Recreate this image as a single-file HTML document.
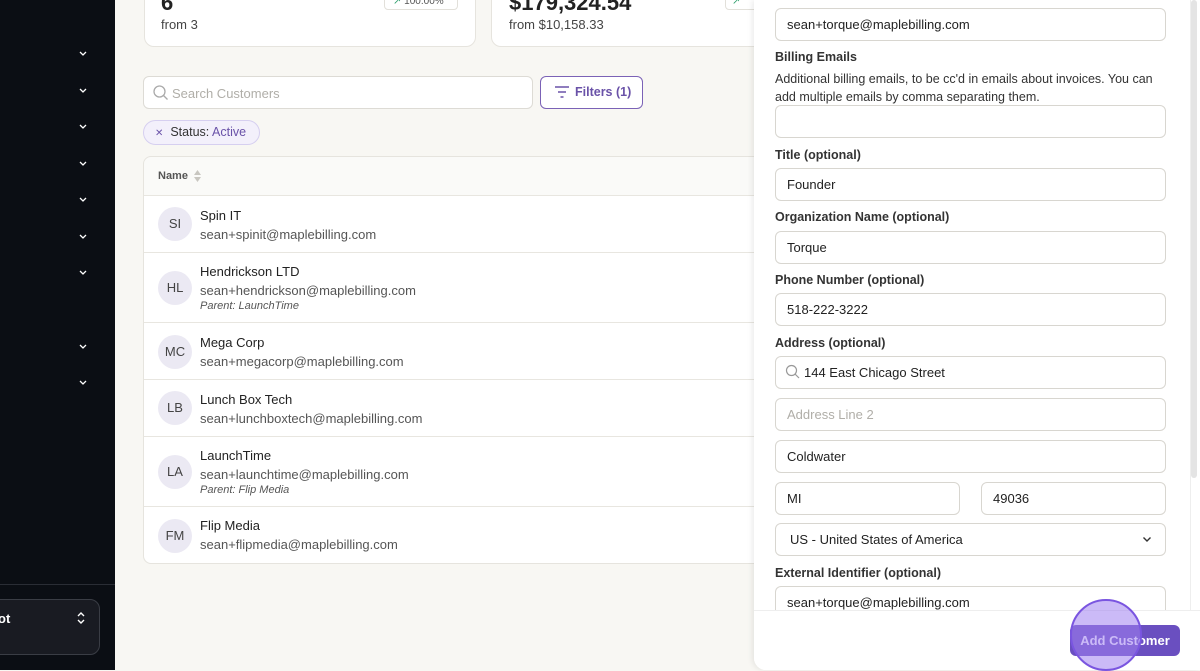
<!DOCTYPE html>
<html><head><style>
*{box-sizing:border-box;margin:0;padding:0}
body{width:1200px;height:670px;overflow:hidden;background:#f8f7f3;font-family:"Liberation Sans",sans-serif;position:relative;color:#222}
.sb{position:absolute;left:0;top:0;width:115px;height:670px;background:#0b0e14}
.chev{position:absolute;left:78px;width:10px;height:10px}
.card{position:absolute;background:#fff;border:1px solid #e6e4de;border-radius:10px}
.abs{position:absolute}
.row{position:absolute;left:144px;width:640px;border-top:1px solid #e8e6e0;background:#fff}
.av{position:absolute;left:14px;width:34px;height:34px;border-radius:50%;background:#ebe9f3;font-size:13px;color:#444;text-align:center;line-height:34px}
.nm{position:absolute;left:56px;font-size:13px;color:#222}
.em{position:absolute;left:56px;font-size:13px;color:#555}
.pa{position:absolute;left:56px;font-size:11px;color:#555;font-style:italic}
.panel{position:absolute;left:754px;top:0;width:446px;height:670px;background:#fff;border-radius:0 0 0 12px;box-shadow:-2px 0 6px rgba(0,0,0,.08)}
.lb{position:absolute;left:21px;font-size:12.5px;color:#333;font-weight:bold}
.in{position:absolute;left:21px;width:391px;height:33px;border:1px solid #d8d6d0;border-radius:6px;font-size:13px;color:#222;padding-left:11px;line-height:31px;background:#fff}
</style></head><body>
<div class="sb">
<svg class="chev" style="top:49px" viewBox="0 0 10 10"><path d="M2 3l3 3 3-3" stroke="#fff" fill="none" stroke-width="1.3"/></svg>
<svg class="chev" style="top:86px" viewBox="0 0 10 10"><path d="M2 3l3 3 3-3" stroke="#fff" fill="none" stroke-width="1.3"/></svg>
<svg class="chev" style="top:122px" viewBox="0 0 10 10"><path d="M2 3l3 3 3-3" stroke="#fff" fill="none" stroke-width="1.3"/></svg>
<svg class="chev" style="top:159px" viewBox="0 0 10 10"><path d="M2 3l3 3 3-3" stroke="#fff" fill="none" stroke-width="1.3"/></svg>
<svg class="chev" style="top:195px" viewBox="0 0 10 10"><path d="M2 3l3 3 3-3" stroke="#fff" fill="none" stroke-width="1.3"/></svg>
<svg class="chev" style="top:232px" viewBox="0 0 10 10"><path d="M2 3l3 3 3-3" stroke="#fff" fill="none" stroke-width="1.3"/></svg>
<svg class="chev" style="top:268px" viewBox="0 0 10 10"><path d="M2 3l3 3 3-3" stroke="#fff" fill="none" stroke-width="1.3"/></svg>
<svg class="chev" style="top:342px" viewBox="0 0 10 10"><path d="M2 3l3 3 3-3" stroke="#fff" fill="none" stroke-width="1.3"/></svg>
<svg class="chev" style="top:378px" viewBox="0 0 10 10"><path d="M2 3l3 3 3-3" stroke="#fff" fill="none" stroke-width="1.3"/></svg>
<div class="abs" style="left:0;top:584px;width:115px;height:1px;background:#2a2d35"></div>
<div class="abs" style="left:-20px;top:599px;width:120px;height:56px;border:1px solid #3a3d45;border-radius:10px;background:#191b22"></div>
<div class="abs" style="left:-2px;top:611px;color:#fff;font-size:13px;font-weight:bold">ot</div>
<svg class="abs" style="left:75px;top:610px" width="12" height="16" viewBox="0 0 12 16"><path d="M3 6l3-3 3 3M3 10l3 3 3-3" stroke="#fff" fill="none" stroke-width="1.4"/></svg>
</div>
<div class="card" style="left:144px;top:-12px;width:332px;height:59px"></div>
<div class="abs" style="left:161px;top:-10px;font-size:22px;font-weight:bold">6</div>
<div class="abs" style="left:384px;top:-6px;width:74px;height:16px;border:1px solid #e2e0da;border-radius:4px;font-size:10px;color:#555;padding-left:8px;line-height:13px"><span style="color:#2a9d6a">↗</span> 100.00%</div>
<div class="abs" style="left:161px;top:17px;font-size:13px;color:#444">from 3</div>
<div class="card" style="left:491px;top:-12px;width:300px;height:59px"></div>
<div class="abs" style="left:509px;top:-10px;font-size:22px;font-weight:bold">$179,324.54</div>
<div class="abs" style="left:725px;top:-6px;width:40px;height:16px;border:1px solid #e2e0da;border-radius:4px;font-size:10px;color:#2a9d6a;padding-left:6px;line-height:13px">↗</div>
<div class="abs" style="left:509px;top:17px;font-size:13px;color:#444">from $10,158.33</div>
<div class="abs" style="left:143px;top:76px;width:390px;height:33px;border:1px solid #dddbd5;border-radius:6px;background:#fff"></div>
<svg class="abs" style="left:152px;top:84px" width="18" height="18" viewBox="0 0 18 18"><circle cx="7.5" cy="7.5" r="5.5" stroke="#aaa" fill="none" stroke-width="1.3"/><path d="M11.5 11.5l4 4" stroke="#aaa" stroke-width="1.3"/></svg>
<div class="abs" style="left:172px;top:86px;font-size:13px;color:#b0aea8">Search Customers</div>
<div class="abs" style="left:540px;top:76px;width:103px;height:33px;border:1px solid #7b62b6;border-radius:6px;background:#fff;font-size:12.5px;color:#6a52a8;font-weight:bold;line-height:31px;padding-left:34px">Filters (1)</div>
<svg class="abs" style="left:554px;top:85px" width="16" height="14" viewBox="0 0 16 14"><path d="M1 2h14M4 7h8M6.5 12h3" stroke="#6a52a8" stroke-width="1.4"/></svg>
<div class="abs" style="left:143px;top:120px;width:117px;height:25px;border:1px solid #d6cff0;border-radius:13px;background:#f3f0fb;font-size:12.5px;line-height:23px;padding-left:11px;color:#333"><span style="font-size:10px;color:#6a52a8">✕</span>&nbsp; Status: <span style="color:#6a52a8">Active</span></div>
<div class="abs" style="left:143px;top:156px;width:660px;height:408px;border:1px solid #e6e4de;border-radius:8px;background:#fafaf8;overflow:hidden"></div>
<div class="abs" style="left:158px;top:170px;font-size:11px;color:#555;font-weight:bold">Name</div>
<svg class="abs" style="left:193px;top:168px" width="9" height="16" viewBox="0 0 9 16"><path d="M1 7l3.5-5 3.5 5z M1 9l3.5 5 3.5-5z" fill="#c8c6c0"/></svg>
<div class="row" style="top:195px;height:58px"><div class="av" style="top:11px">SI</div><div class="nm" style="top:12px">Spin IT</div><div class="em" style="top:31px">sean+spinit@maplebilling.com</div></div>
<div class="row" style="top:252px;height:71px"><div class="av" style="top:18px">HL</div><div class="nm" style="top:11px">Hendrickson LTD</div><div class="em" style="top:30px">sean+hendrickson@maplebilling.com</div><div class="pa" style="top:47px">Parent: LaunchTime</div></div>
<div class="row" style="top:322px;height:58px"><div class="av" style="top:12px">MC</div><div class="nm" style="top:12px">Mega Corp</div><div class="em" style="top:31px">sean+megacorp@maplebilling.com</div></div>
<div class="row" style="top:379px;height:58px"><div class="av" style="top:11px">LB</div><div class="nm" style="top:12px">Lunch Box Tech</div><div class="em" style="top:31px">sean+lunchboxtech@maplebilling.com</div></div>
<div class="row" style="top:436px;height:71px"><div class="av" style="top:18px">LA</div><div class="nm" style="top:11px">LaunchTime</div><div class="em" style="top:30px">sean+launchtime@maplebilling.com</div><div class="pa" style="top:47px">Parent: Flip Media</div></div>
<div class="row" style="top:506px;height:57px;border-radius:0 0 8px 8px"><div class="av" style="top:12px">FM</div><div class="nm" style="top:11px">Flip Media</div><div class="em" style="top:30px">sean+flipmedia@maplebilling.com</div></div>

<div class="panel">
<div class="abs" style="left:436px;top:0;width:1px;height:610px;background:#eee"></div>
<div class="abs" style="left:437px;top:0;width:6px;height:478px;background:#e4e4e4;border-radius:3px"></div>
<div class="in" style="top:8px">sean+torque@maplebilling.com</div>
<div class="lb" style="top:50px">Billing Emails</div>
<div class="abs" style="left:21px;top:70px;width:380px;font-size:12.5px;color:#333;line-height:18px">Additional billing emails, to be cc'd in emails about invoices. You can add multiple emails by comma separating them.</div>
<div class="in" style="top:105px"></div>
<div class="lb" style="top:148px">Title (optional)</div>
<div class="in" style="top:168px">Founder</div>
<div class="lb" style="top:210px">Organization Name (optional)</div>
<div class="in" style="top:231px">Torque</div>
<div class="lb" style="top:273px">Phone Number (optional)</div>
<div class="in" style="top:293px">518-222-3222</div>
<div class="lb" style="top:336px">Address (optional)</div>
<div class="in" style="top:356px;padding-left:28px">144 East Chicago Street</div>
<svg class="abs" style="left:31px;top:364px" width="16" height="16" viewBox="0 0 16 16"><circle cx="6.5" cy="6.5" r="5" stroke="#999" fill="none" stroke-width="1.2"/><path d="M10 10l4 4" stroke="#999" stroke-width="1.2"/></svg>
<div class="in" style="top:398px;color:#b0aea8">Address Line 2</div>
<div class="in" style="top:440px">Coldwater</div>
<div class="in" style="top:482px;width:185px">MI</div>
<div class="in" style="top:482px;left:227px;width:185px">49036</div>
<div class="in" style="top:523px;padding-left:14px">US - United States of America</div>
<svg class="abs" style="left:387px;top:533px" width="12" height="12" viewBox="0 0 12 12"><path d="M2.5 4.5l3.5 3.5 3.5-3.5" stroke="#333" fill="none" stroke-width="1.4"/></svg>
<div class="lb" style="top:566px">External Identifier (optional)</div>
<div class="in" style="top:586px;height:28px;border-bottom:none;border-radius:6px 6px 0 0">sean+torque@maplebilling.com</div>
<div class="abs" style="left:0;top:610px;width:446px;height:60px;background:#fff;border-top:1px solid #eee;border-radius:0 0 0 12px"></div>
<div class="abs" style="left:316px;top:625px;width:110px;height:31px;background:#6a4fc0;border-radius:6px;color:#fff;font-size:13px;font-weight:bold;text-align:center;line-height:31px">Add Customer</div>
<div class="abs" style="left:316px;top:599px;width:72px;height:72px;border-radius:50%;background:rgba(160,130,240,.55);border:2px solid #7a55e0"></div>
</div>
</body></html>
